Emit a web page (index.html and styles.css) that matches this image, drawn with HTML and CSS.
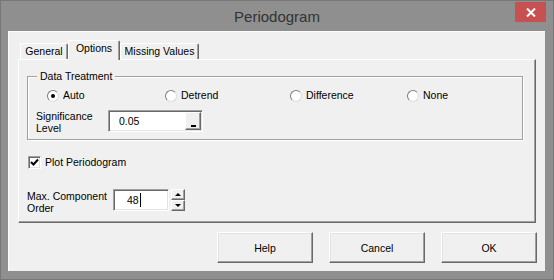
FILE: index.html
```html
<!DOCTYPE html>
<html lang="en">
<head>
    <meta charset="UTF-8">
    <title>Periodogram</title>
    <link rel="stylesheet" href="styles.css">
</head>
<body>
    <div class="window">
        <div class="titlebar">
            <span></span>
            <div class="title">Periodogram</div>
            <div class="close">
                <svg width="10" height="9" viewBox="0 0 10 9"><path d="M1 0.5 L9 8.5 M9 0.5 L1 8.5" stroke="#fff" stroke-width="2"/></svg>
            </div>
        </div>

        <div class="client">
            <div class="tabs">
                <div class="tab tab-general">General</div>
                <div class="tab tab-options active">Options</div>
                <div class="tab tab-missing">Missing Values</div>
            </div>

            <div class="panel">
                <div class="group">
                    <div class="group-title">Data Treatment</div>
                    <div class="radios">
                        <label class="radio"><span class="circle checked"></span>Auto</label>
                        <label class="radio"><span class="circle"></span>Detrend</label>
                        <label class="radio"><span class="circle"></span>Difference</label>
                        <label class="radio"><span class="circle"></span>None</label>
                    </div>
                    <div class="field-row sig">
                        <span class="field-label sig-label">Significance<br>Level</span>
                        <div class="textbox wide">
                            <span class="value sig-value">0.05</span>
                            <span class="dots"><i></i></span>
                        </div>
                    </div>
                </div>

                <label class="check">
                    <span class="check-box">
                        <svg width="9" height="9" viewBox="0 0 9 9"><path d="M1 4 L3.5 6.5 L8 1.5" stroke="#000" stroke-width="2" fill="none"/></svg>
                    </span>
                    Plot Periodogram
                </label>

                <div class="field-row order">
                    <span class="field-label order-label">Max. Component<br>Order</span>
                    <div class="textbox short">
                        <span class="value order-value">48</span><span class="caret"></span>
                    </div>
                    <div class="spinner">
                        <span class="spin"><b class="arrow-up"></b></span>
                        <span class="spin"><b class="arrow-down"></b></span>
                    </div>
                </div>
            </div>

            <div class="buttons">
                <button>Help</button>
                <button>Cancel</button>
                <button>OK</button>
            </div>
        </div>
    </div>
</body>
</html>
```

FILE: styles.css
```css
* {
    box-sizing: border-box;
}
body {
    margin: 0;
    font-family: "Liberation Sans", Arial, sans-serif;
    font-size: 10.5px;
    color: #000;
}
.window {
    width: 554px;
    height: 280px;
    background-color: #8f8f8f;
    border: 1px solid #777;
}
.titlebar {
    height: 30px;
    display: grid;
    grid-template-columns: 1fr auto 1fr;
    align-items: start;
}
.title {
    font-size: 15px;
    line-height: 30px;
    padding-top: 1px;
    color: #333;
}
.close {
    justify-self: end;
    width: 31px;
    height: 20px;
    margin-top: 1px;
    margin-right: 7px;
    background-color: #c75050;
    display: flex;
    align-items: center;
    justify-content: center;
}
.client {
    margin: 0 8px 0 7px;
    height: 240px;
    background-color: #f0f0f0;
    padding: 9px 8px 0 10px;
    box-shadow: inset 1px 1px 0 #fbfbfb;
}

/* tabs */
.tabs {
    display: flex;
    align-items: flex-end;
    height: 19px;
    padding-left: 2px;
}
.tab {
    height: 16px;
    line-height: 14px;
    text-align: center;
    border: 1px solid #696969;
    border-color: #fff #696969 transparent #fff;
    border-bottom: none;
    border-radius: 2px 2px 0 0;
    box-shadow: inset -1px 0 0 #a0a0a0;
    background-color: #f0f0f0;
}
.tab-general {
    width: 48px;
}
.tab-options {
    width: 52px;
}
.tab-missing {
    width: 79px;
}
.tab.active {
    height: 20px;
    margin-bottom: -1px;
    padding-top: 1px;
    line-height: 13px;
    position: relative;
    z-index: 1;
}

.panel {
    height: 164px;
    margin-right: 1px;
    border: 1px solid;
    border-color: #fff #696969 #696969 #fff;
    box-shadow: inset -1px -1px 0 #a0a0a0;
}

/* group box */
.group {
    margin: 16px 12px 0 8px;
    height: 64px;
    border: 1px solid #a0a0a0;
    box-shadow: 1px 1px 0 #fff, inset 1px 1px 0 #fff;
}
.group-title {
    width: fit-content;
    margin: -8px 0 0 9px;
    padding: 0 3px;
    line-height: 14px;
    background-color: #f0f0f0;
}
.radios {
    display: grid;
    grid-template-columns: 118px 125px 117px auto;
    margin: 6px 0 0 19px;
    height: 13px;
    line-height: 13px;
}
.radio {
    display: flex;
    align-items: center;
    gap: 4px;
}
.circle {
    width: 12px;
    height: 12px;
    border-radius: 50%;
    background-color: #fff;
    border: 1px solid;
    border-color: #7d7d7d #dcdcdc #dcdcdc #7d7d7d;
    display: flex;
    align-items: center;
    justify-content: center;
}
.circle.checked::after {
    content: "";
    width: 4px;
    height: 4px;
    border-radius: 50%;
    background-color: #000;
}

/* fields */
.field-row {
    display: flex;
    align-items: flex-start;
}
.field-label {
    line-height: 12px;
}
.sig {
    margin: 8px 0 0 8px;
}
.sig-label {
    width: 72px;
}
.textbox {
    height: 22px;
    display: flex;
    align-items: flex-start;
    background-color: #fff;
    border: 1px solid;
    border-color: #a0a0a0 #fff #fff #a0a0a0;
    box-shadow: inset 1px 1px 0 #696969, inset -1px -1px 0 #e3e3e3;
}
.wide {
    width: 95px;
}
.short {
    width: 56px;
}
.value {
    line-height: 20px;
}
.sig-value {
    flex: 1;
    padding-left: 10px;
}
.order-value {
    padding-left: 13px;
}
.caret {
    width: 1px;
    height: 14px;
    margin-top: 3px;
    margin-left: 1px;
    background-color: #000;
}
.dots {
    width: 16px;
    height: 18px;
    margin: 1px 1px 0 0;
    background-color: #f0f0f0;
    border: 1px solid;
    border-color: #fff #696969 #696969 #fff;
    box-shadow: inset -1px -1px 0 #a0a0a0;
    display: flex;
    align-items: flex-end;
    justify-content: center;
    padding-bottom: 2px;
}
.dots i {
    width: 5px;
    height: 2px;
    background-color: #000;
}

/* checkbox */
.check {
    display: flex;
    align-items: center;
    gap: 4px;
    margin: 16px 0 0 9px;
    line-height: 13px;
}
.check-box {
    width: 13px;
    height: 13px;
    background-color: #fff;
    border: 1px solid;
    border-color: #a0a0a0 #fff #fff #a0a0a0;
    box-shadow: inset 1px 1px 0 #696969, inset -1px -1px 0 #e3e3e3;
    display: flex;
    align-items: center;
    justify-content: center;
}

.order {
    margin: 20px 0 0 8px;
}
.order-label {
    width: 86px;
    padding-top: 1px;
}
.spinner {
    width: 14px;
    height: 22px;
    margin-left: 2px;
    display: flex;
    flex-direction: column;
}
.spin {
    height: 11px;
    background-color: #f0f0f0;
    border: 1px solid;
    border-color: #fff #696969 #696969 #fff;
    box-shadow: inset -1px -1px 0 #a0a0a0;
    display: flex;
    align-items: center;
    justify-content: center;
}
.arrow-up {
    border-left: 3px solid transparent;
    border-right: 3px solid transparent;
    border-bottom: 3px solid #000;
}
.arrow-down {
    border-left: 3px solid transparent;
    border-right: 3px solid transparent;
    border-top: 3px solid #000;
}

/* dialog buttons */
.buttons {
    display: flex;
    justify-content: flex-end;
    gap: 16px;
    margin-top: 9px;
}
.buttons button {
    width: 96px;
    height: 31px;
    font-family: inherit;
    font-size: 10.5px;
    color: #000;
    background-color: #f0f0f0;
    border: 1px solid;
    border-color: #fff #696969 #696969 #fff;
    box-shadow: inset -1px -1px 0 #a0a0a0, inset 1px 1px 0 #e3e3e3;
    padding: 0;
}
```
